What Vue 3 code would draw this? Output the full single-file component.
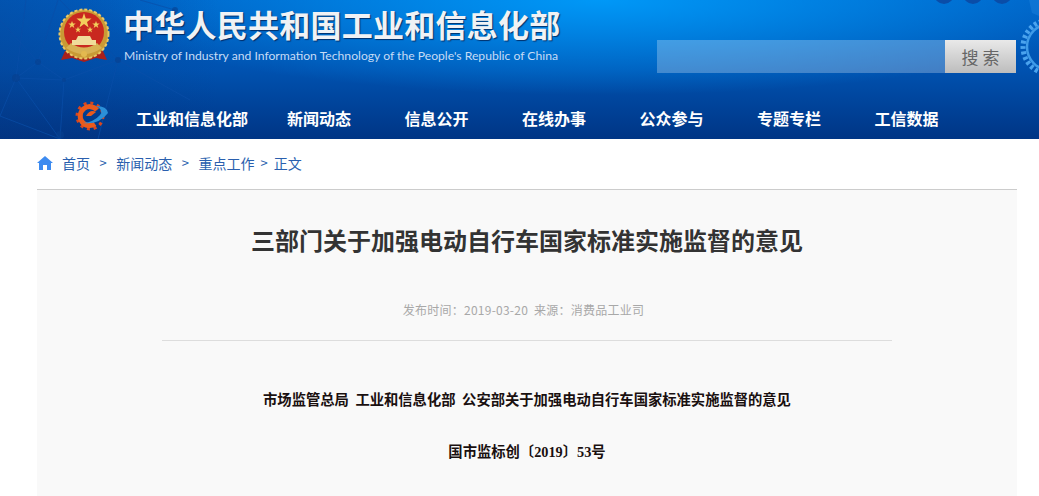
<template>
  <div class="page">
    <!-- En-tête bleu -->
    <header class="entete">
      <svg class="reseau" width="230" height="139" viewBox="0 0 230 139" fill="none">
        <g stroke="#0a4fa8" stroke-width="1" opacity="0.7">
          <path d="M26 0 L16 78 L0 116 M16 78 L38 62 L58 0 M38 62 L0 20 M38 62 L64 80 L118 60 M64 80 L16 78 M16 78 L60 139 M64 80 L60 139 M118 60 L175 10 L140 0 M118 60 L98 139 M118 60 L60 0 M118 60 L190 100 M0 116 L60 139"/>
        </g>
        <g fill="#07408f" opacity="0.6">
          <circle cx="16" cy="78" r="4"/>
          <circle cx="38" cy="62" r="3"/>
          <circle cx="64" cy="80" r="2"/>
          <circle cx="118" cy="60" r="3"/>
          <circle cx="175" cy="10" r="3"/>
          <circle cx="60" cy="135" r="4"/>
        </g>
      </svg>

      <div class="points">
        <span class="point"></span>
        <span class="point"></span>
        <span class="point"></span>
      </div>

      <svg class="roue" width="40" height="75" viewBox="0 0 40 75" fill="none">
        <circle cx="51" cy="47" r="27" stroke="#4aa3ee" stroke-width="5" stroke-dasharray="3 2.500"/>
        <circle cx="51" cy="47" r="23" stroke="#3f9be8" stroke-width="2.500"/>
        <path d="M30 0 H40 V16 L33 13 Z" fill="#1a7fdc" opacity="0.5"/>
      </svg>

      <div class="ligne-haut">
        <div class="marque">
          <svg class="embleme" width="52" height="54" viewBox="0 0 52 54">
            <path d="M7 43 L3 52 L14 50 L26 54 L38 50 L49 52 L45 43 Z" fill="#a8201c"/>
            <circle cx="26" cy="26" r="24.500" fill="#c99a35"/>
            <circle cx="26" cy="26" r="24.500" fill="none" stroke="#e8c766" stroke-width="2" stroke-dasharray="3 2"/>
            <circle cx="26" cy="24" r="20" fill="#c9281f"/>
            <path d="M8 40 Q26 52 44 40 L39 35 Q26 44 13 35 Z" fill="#d8b254"/>
            <path d="M26 5 L27.800 10.500 L33.500 10.500 L29 14 L30.600 19.500 L26 16 L21.400 19.500 L23 14 L18.500 10.500 L24.200 10.500 Z" fill="#f2cf5c"/>
            <path d="M14 13 l1 2.500 h2.700 l-2.200 1.700 l.8 2.800 l-2.300 -1.700 l-2.300 1.700 l.8 -2.800 l-2.200 -1.700 h2.700 Z" fill="#f2cf5c"/>
            <path d="M38 13 l1 2.500 h2.700 l-2.200 1.700 l.8 2.800 l-2.300 -1.700 l-2.300 1.700 l.8 -2.800 l-2.200 -1.700 h2.700 Z" fill="#f2cf5c"/>
            <path d="M20 18.500 l.8 2.200 h2.300 l-1.900 1.400 l.8 2.300 l-2 -1.400 l-2 1.400 l.8 -2.300 l-1.900 -1.400 h2.300 Z" fill="#f2cf5c"/>
            <path d="M32 18.500 l.8 2.200 h2.300 l-1.900 1.400 l.8 2.300 l-2 -1.400 l-2 1.400 l.8 -2.300 l-1.900 -1.400 h2.300 Z" fill="#f2cf5c"/>
            <path d="M20 28 H32 L34 32 H38 V37 H14 V32 H18 Z" fill="#f0dc9a"/>
            <circle cx="26" cy="46" r="3" fill="#e3b94f"/>
          </svg>
          <div class="marque-textes">
            <h1 class="nom">中华人民共和国工业和信息化部</h1>
            <p class="nom-en">Ministry of Industry and Information Technology of the People's Republic of China</p>
          </div>
        </div>
        <div class="recherche">
          <div class="champ"></div>
          <button class="btn-cherche">搜 索</button>
        </div>
      </div>

      <nav class="menu">
        <svg class="logo" width="34" height="30" viewBox="0 0 34 30" fill="none">
          <circle cx="15" cy="15" r="13" stroke="#d9461e" stroke-width="3" stroke-dasharray="3 3.800"/>
          <path d="M22 9 A 9.500 9.500 0 1 0 20 23" stroke="#ea5a1c" stroke-width="5"/>
          <path d="M11 15 Q15 8 21 11 L16 15 Z" fill="#ea5a1c"/>
          <path d="M8 22 Q24 24 33 12 Q32 5 21 5 Q29 9 25 14 Q19 21 8 22 Z" fill="#2b8fd8"/>
        </svg>
        <a v-for="(item, i) in menu" :key="item" class="menu-lien" :class="{ premier: i === 0 }">{{ item }}</a>
      </nav>
    </header>

    <!-- Fil d'Ariane -->
    <div class="ariane">
      <svg class="maison" width="16" height="14" viewBox="0 0 16 14">
        <path d="M8 0 L16 7 L14 7 V14 H10 V9 H6 V14 H2 V7 H0 Z" fill="#3d8bf0"/>
      </svg>
      <a class="ariane-lien ecart-maison">首页</a>
      <span class="sep large">&gt;</span>
      <a class="ariane-lien">新闻动态</a>
      <span class="sep large">&gt;</span>
      <a class="ariane-lien">重点工作</a>
      <span class="sep">&gt;</span>
      <a class="ariane-lien">正文</a>
    </div>

    <!-- Article -->
    <main class="article">
      <h2 class="titre">三部门关于加强电动自行车国家标准实施监督的意见</h2>
      <p class="infos">发布时间：2019-03-20&nbsp;&nbsp;来源：消费品工业司</p>
      <div class="corps">
        <p class="para">市场监管总局 工业和信息化部 公安部关于加强电动自行车国家标准实施监督的意见</p>
        <p class="para">国市监标创〔2019〕53号</p>
      </div>
    </main>
  </div>
</template>

<script setup>
const menu = ['工业和信息化部', '新闻动态', '信息公开', '在线办事', '公众参与', '专题专栏', '工信数据']
</script>

<style>
html, body {
  overflow: hidden;
  background: #fff;
}
</style>

<style scoped>
.page {
  width: 1039px;
  height: 496px;
  overflow: hidden;
  font-family: "Noto Sans CJK SC", "Noto Sans", sans-serif;
}

.entete {
  position: relative;
  height: 139px;
  overflow: hidden;
  background:
    linear-gradient(90deg, rgba(10, 50, 120, 0.28), rgba(10, 50, 120, 0) 220px),
    radial-gradient(ellipse 520px 95px at 600px 0, #0098f7 0%, rgba(0, 140, 240, 0) 100%),
    linear-gradient(180deg, #0060c4 0%, #0052b0 50%, #003585 100%);
}

.reseau {
  position: absolute;
  left: 0;
  top: 0;
}

.roue {
  position: absolute;
  right: 0;
  top: 0;
}

.points {
  position: absolute;
  top: -16px;
  left: 934px;
  display: flex;
  gap: 9px;
}

.point {
  width: 20px;
  height: 20px;
  border-radius: 50%;
  background: #0a4da8;
}

.ligne-haut {
  position: relative;
  display: flex;
  justify-content: space-between;
  height: 88px;
  padding: 8px 23px 0 58px;
}

.marque {
  display: flex;
  gap: 13px;
}

.embleme {
  flex: none;
}

.marque-textes {
  margin-top: -3px;
}

.nom {
  margin: 0;
  font-size: 31px;
  line-height: 38px;
  font-weight: 700;
  letter-spacing: 0.25px;
  white-space: nowrap;
  color: #f0f2f5;
  text-shadow: 1px 1px 1px rgba(0, 30, 80, 0.8);
}

.nom-en {
  margin: 4px 0 0 1px;
  font-family: "Lato", sans-serif;
  font-size: 12.160px;
  line-height: 18px;
  white-space: nowrap;
  color: #c6dcf6;
}

.recherche {
  display: flex;
  height: 33px;
  margin-top: 32px;
}

.champ {
  width: 288px;
  background: rgba(255, 255, 255, 0.26);
}

.btn-cherche {
  width: 71px;
  border: none;
  padding: 0;
  font-family: inherit;
  font-size: 17px;
  color: #666;
  background: linear-gradient(180deg, #e9e9e9, #bdbdbd);
}

.menu {
  position: relative;
  display: flex;
  align-items: center;
  height: 44px;
  padding-left: 75px;
}

.logo {
  flex: none;
  margin-top: -5px;
}

.menu-lien {
  width: 117.500px;
  font-size: 16px;
  line-height: 24px;
  font-weight: 700;
  color: #fff;
  white-space: nowrap;
}

.menu-lien.premier {
  width: 151px;
  margin-left: 27px;
}

.ariane {
  display: flex;
  align-items: center;
  height: 50px;
  padding: 0 0 3px 37px;
  box-sizing: border-box;
  font-size: 14px;
  color: #2a5fae;
}

.ecart-maison {
  margin-left: 9px;
}

.sep {
  margin: 0 6px;
  font-size: 13px;
}

.sep.large {
  margin: 0 9.500px;
}

.article {
  width: 980px;
  height: 320px;
  margin-left: 37px;
  border-top: 1px solid #ccc;
  background: #f9f9f9;
  text-align: center;
}

.titre {
  margin: 0;
  padding-top: 32px;
  font-size: 24px;
  line-height: 36px;
  font-weight: 700;
  color: #333;
}

.infos {
  width: 730px;
  margin: 0 auto;
  padding: 43px 7px 21px 0;
  box-sizing: border-box;
  border-bottom: 1px solid #ddd;
  font-size: 12px;
  letter-spacing: 0.25px;
  line-height: 18px;
  color: #a8a8a8;
}

.corps {
  padding-top: 46px;
}

.para {
  margin: 0 0 26px;
  font-family: "Liberation Serif", "Noto Sans CJK SC", serif;
  font-size: 14.300px;
  word-spacing: 3px;
  line-height: 26px;
  font-weight: 700;
  color: #1a1010;
}
</style>
